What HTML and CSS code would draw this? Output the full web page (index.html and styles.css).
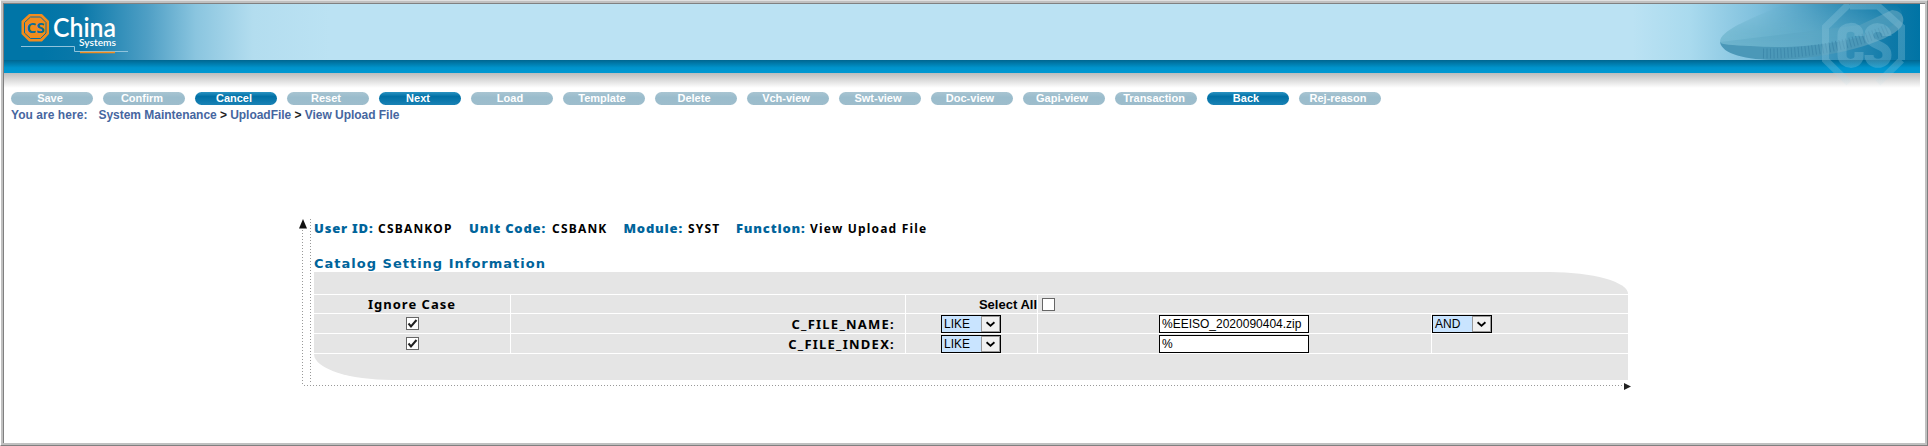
FILE: index.html
```html
<!DOCTYPE html>
<html lang="en">
<head>
<meta charset="utf-8">
<title>View Upload File</title>
<link rel="stylesheet" href="styles.css">
</head>
<body>
<div class="frame">
  <header class="banner">
    <svg class="logo" width="130" height="56" viewBox="4 4 130 56">
      <path d="M29.500 15H41.500L48 21.500V33.500L41.500 40.500H29.500L22.500 33.500V21.500Z" fill="#f28c1c" stroke="#f28c1c" stroke-width="2" stroke-linejoin="round"/>
      <path d="M30.500 17H40.500L46 22.500V33L40.500 38.500H30.500L24.500 33V22.500Z" fill="none" stroke="#0a6c9c" stroke-width="1"/>
      <text class="logo-cs" x="26.500" y="33" textLength="18" lengthAdjust="spacingAndGlyphs">CS</text>
      <text class="logo-china" x="53" y="37" textLength="63" lengthAdjust="spacingAndGlyphs">China</text>
      <text class="logo-sys" x="79" y="46" textLength="37" lengthAdjust="spacingAndGlyphs">Systems</text>
      <path d="M21 46.500H74.500V51.500H128" fill="none" stroke="#8fc3dc" stroke-width="1"/>
      <path d="M80 52.500H115" stroke="#f28c1c" stroke-width="1.500"/>
    </svg>
    <svg class="coin" width="280" height="84" viewBox="1640 4 280 84">
      <defs>
        <linearGradient id="face" x1="0" x2="1"><stop offset="0" stop-color="#73b8d0"/><stop offset=".5" stop-color="#60abc8"/><stop offset="1" stop-color="#3b94b8"/></linearGradient>
        <linearGradient id="fade" x1="0" x2="0" y1="0" y2="1"><stop offset="0" stop-color="#fff" stop-opacity="0"/><stop offset=".5" stop-color="#fff" stop-opacity=".8"/><stop offset="1" stop-color="#fff"/></linearGradient>
        <mask id="m"><rect x="1640" y="4" width="280" height="56" fill="url(#fade)"/></mask>
        <linearGradient id="mark" gradientUnits="userSpaceOnUse" x1="0" x2="0" y1="4" y2="84"><stop offset="0" stop-color="#8cc6dc" stop-opacity=".36"/><stop offset=".7" stop-color="#8cc6dc" stop-opacity=".32"/><stop offset="1" stop-color="#c4dfe8" stop-opacity=".15"/></linearGradient>
      </defs>
      <path d="M1720 42C1722 54 1745 60 1779 60C1830 58 1888 43 1901 27C1906 19 1903 11 1892 10L1860 25Z" fill="#4b98b8"/>
      <path d="M1720 42C1720 30 1750 19 1785 4H1895C1906 12 1904 20 1886 29C1850 43 1795 50 1750 46C1732 45 1721 45 1720 42Z" fill="url(#face)" mask="url(#m)"/>
      <path d="M1763 53.500C1810 54 1855 44 1888 29" fill="none" stroke="#367fa3" stroke-width="10" stroke-dasharray="1 2.500" opacity=".6"/>
      <g fill="none" stroke="url(#mark)">
        <path d="M1849 4L1825.500 27V60L1849 83M1901.500 60V27L1878 6H1850M1901.500 60L1878 83" stroke-width="7"/>
        <path d="M1859 36V34C1859 25 1842 25 1842 35V55C1842 66 1859 66 1859 56V52M1887 36C1887 25 1869 25 1869 35C1869 47 1887 43 1887 55C1887 66 1869 66 1869 55" stroke-width="9"/>
      </g>
    </svg>
  </header>
  <nav class="tools">
    <button class="pill">Save</button><button class="pill">Confirm</button><button class="pill on">Cancel</button><button class="pill">Reset</button><button class="pill on">Next</button><button class="pill">Load</button><button class="pill">Template</button><button class="pill">Delete</button><button class="pill">Vch-view</button><button class="pill">Swt-view</button><button class="pill">Doc-view</button><button class="pill">Gapi-view</button><button class="pill">Transaction</button><button class="pill on">Back</button><button class="pill">Rej-reason</button>
  </nav>
  <div class="crumbs"><span class="here">You are here:</span><span>System Maintenance</span><i>&gt;</i><span>UploadFile</span><i>&gt;</i><span>View Upload File</span></div>
  <main class="panel">
    <svg class="axes" width="1334" height="172" viewBox="298 219 1334 172">
      <path d="M299 228.500L303 219L307 228.500Z" fill="#111"/>
      <path d="M302.500 230V384M310.500 219V383M304 385.500H1624" fill="none" stroke="#999" stroke-dasharray="1 2"/>
      <path d="M1624 383V390L1631 386.500Z" fill="#222"/>
    </svg>
    <div class="info"><b>User ID:</b><span>CSBANKOP</span><b>Unit Code:</b><span>CSBANK</span><b>Module:</b><span>SYST</span><b>Function:</b><span>View Upload File</span></div>
    <h1 class="title">Catalog Setting Information</h1>
    <section class="grid">
      <div class="cell cap"></div>
      <div class="cell mid label">Ignore Case</div><div class="cell"></div><div class="cell right all">Select All</div><div class="cell rest"><span class="box"></span></div>
      <div class="cell mid"><span class="box"><svg width="11" height="11" viewBox="0 0 11 11"><path d="M1.500 5.500L4 8.500L9.500 2" /></svg></span></div><div class="cell right label name">C_FILE_NAME:</div><div class="cell mid op"><span class="select">LIKE<svg width="19" height="16" viewBox="0 0 19 16"><path d="M5 6L9.500 10L14 6"/></svg></span></div><div class="cell mid op"><span class="field">%EEISO_2020090404.zip</span></div><div class="cell"><span class="select">AND<svg width="19" height="16" viewBox="0 0 19 16"><path d="M5 6L9.500 10L14 6"/></svg></span></div>
      <div class="cell mid"><span class="box"><svg width="11" height="11" viewBox="0 0 11 11"><path d="M1.500 5.500L4 8.500L9.500 2" /></svg></span></div><div class="cell right label name">C_FILE_INDEX:</div><div class="cell mid op"><span class="select">LIKE<svg width="19" height="16" viewBox="0 0 19 16"><path d="M5 6L9.500 10L14 6"/></svg></span></div><div class="cell mid op"><span class="field">%</span></div><div class="cell"></div>
      <div class="cell foot"></div>
    </section>
  </main>
</div>
</body>
</html>
```
FILE: styles.css
```css
* { box-sizing: border-box; }
body { margin: 0; background: #fff; font-family: "Liberation Sans", Arial, sans-serif; font-size: 12px; overflow: hidden; }
.frame { height: 446px; border: 1px solid; border-color: #e0e0e0 #808080 #808080 #fff; box-shadow: inset 0 0 0 2px #c0c0c0, inset 3px 3px 0 #808080; padding: 3px; }
.banner { position: relative; width: 1916px; height: 84px; background:
  linear-gradient(90deg, #0075a7 0, #0075a7 2%, #0a78a9 4%, #4f9fc5 7.500%, #8ac5df 10%, #b3ddef 13%, #bbe2f3 17%, #bbe2f3 85%, #a9daee 88%, #7fc0dd 91.500%, #4197bd 95%, #0e79a8 98.500%, #0074a5 100%) 0 0 / 100% 56px no-repeat,
  linear-gradient(#006690, #0094cc 60%, #0098d2) 0 56px / 100% 13px no-repeat,
  linear-gradient(#bcbcbc, #fff) 0 69px / 100% 15px no-repeat; }
.logo { display: block; }
.coin { position: absolute; right: 0; top: 0; }
.logo-cs { font: bold 15px "Open Sans", sans-serif; fill: #0a6c9c; }
.logo-china { font: 600 26px Lato, sans-serif; fill: #fff; }
.logo-sys { font: 600 10px Lato, sans-serif; fill: #fff; }
.tools { display: flex; gap: 10px; padding: 4px 0 0 7px; }
.pill { width: 82px; height: 13px; padding: 0 4px 0 0; border: 0; border-radius: 7px; background: linear-gradient(#a9c5d2, #9abccc 40%, #9ebdcc); color: #fff; font: bold 11px/13px "Liberation Sans", sans-serif; }
.pill.on { background: linear-gradient(#2a93c2, #0070a5 35%, #1a82b5); }
.crumbs { display: flex; height: 14px; margin-top: 3px; padding-left: 7px; color: #4666a0; font-weight: bold; line-height: 14px; white-space: nowrap; }
.crumbs i { width: 13.500px; color: #222; font-style: normal; text-align: center; }
.crumbs span { letter-spacing: -.03px; }
.crumbs .here { width: 87.500px; letter-spacing: .05px; }
.panel { position: relative; padding: 93px 0 0 310px; }
.axes { position: absolute; left: 294px; top: 97px; }
.info { display: grid; grid-template-columns: 64px 91px 83px 71.500px 64.500px 48px 74px 130px; align-items: baseline; height: 22px; margin-top: 4px; font: bold 13px/18px "Noto Sans", sans-serif; color: #000; white-space: nowrap; }
.info b { color: #00649b; letter-spacing: .8px; }
.info span { font-size: 12px; letter-spacing: 1.200px; }
.title { margin: 14px 0 0; font: bold 13px/17px "DejaVu Sans", sans-serif; letter-spacing: 1px; color: #00649b; white-space: nowrap; }
.grid { display: grid; width: 1314px; grid-template-columns: 196px 394px 131px 393px 196px; grid-template-rows: 22px 18px 19px 19px 26px; gap: 1px; }
.cell { display: flex; align-items: center; background: #e5e5e5; white-space: nowrap; min-width: 0; }
.cap { grid-column: 1 / -1; border-top-right-radius: 78px 22px; }
.foot { grid-column: 1 / -1; border-bottom-left-radius: 78px 26px; }
.rest { grid-column: 4 / -1; padding-left: 4px; }
.mid { justify-content: center; }
.op { padding-right: 1px; }
.right { justify-content: flex-end; }
.label { font: bold 13px/18px "Noto Sans", sans-serif; letter-spacing: 1px; color: #000; }
.name { padding-right: 10px; letter-spacing: 1.250px; }
.all { font-weight: bold; font-size: 13px; }
.box { width: 13px; height: 13px; border: 1px solid #666; background: #fff; display: block; }
.box svg { display: block; }
.box path { fill: none; stroke: #222; stroke-width: 2; }
.select { display: flex; justify-content: space-between; width: 60px; height: 18px; border: 1px solid #000; background: #c9e4ff; padding-left: 2px; line-height: 16px; }
.select svg { background: #f0f0f0; border: 1px solid #999; }
.select path { fill: none; stroke: #000; stroke-width: 2; }
.field { width: 150px; height: 18px; border: 1px solid #000; background: #fff; padding-left: 2px; line-height: 16px; }
```
